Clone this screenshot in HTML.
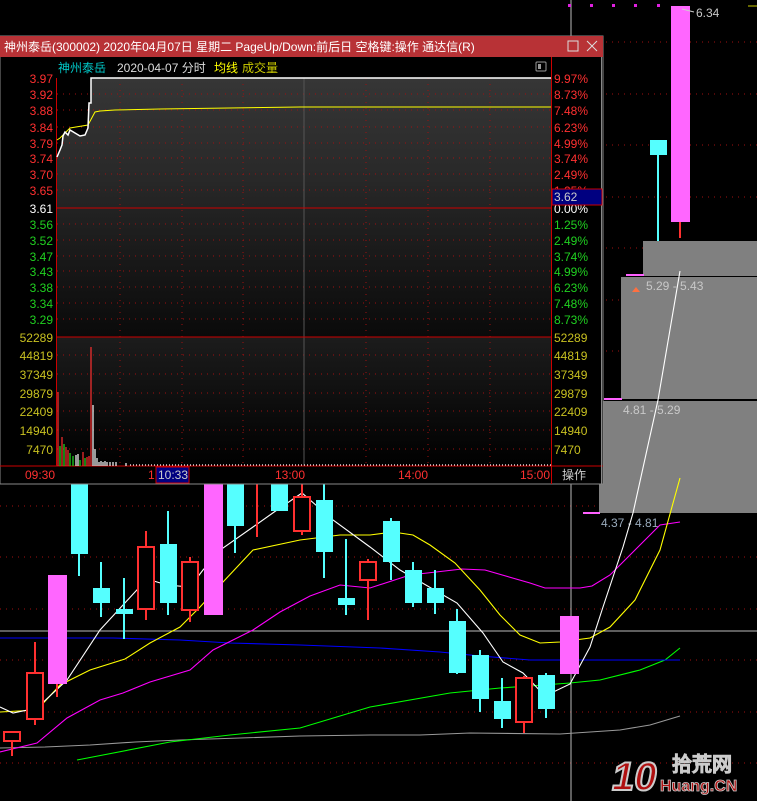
<!DOCTYPE html>
<html><head><meta charset="utf-8"><style>
html,body{margin:0;padding:0;background:#000;width:757px;height:801px;overflow:hidden}
svg{display:block}
text{font-family:"Liberation Sans","Noto Sans CJK SC",sans-serif}
</style></head><body>
<svg width="757" height="801" viewBox="0 0 757 801" xmlns="http://www.w3.org/2000/svg">
<rect width="757" height="801" fill="#000"/>
<g stroke="#a01010" stroke-dasharray="1,5" stroke-width="1">
<line x1="0" y1="42" x2="757" y2="42"/><line x1="0" y1="94" x2="757" y2="94"/><line x1="0" y1="145" x2="757" y2="145"/><line x1="0" y1="197" x2="757" y2="197"/><line x1="0" y1="248" x2="757" y2="248"/><line x1="0" y1="300" x2="757" y2="300"/><line x1="0" y1="351" x2="757" y2="351"/><line x1="0" y1="403" x2="757" y2="403"/><line x1="0" y1="454" x2="757" y2="454"/><line x1="0" y1="506" x2="757" y2="506"/><line x1="0" y1="557" x2="757" y2="557"/><line x1="0" y1="609" x2="757" y2="609"/><line x1="0" y1="660" x2="757" y2="660"/><line x1="0" y1="712" x2="757" y2="712"/><line x1="0" y1="763" x2="757" y2="763"/>
</g>
<line x1="0" y1="631" x2="757" y2="631" stroke="#bbb"/>
<line x1="571" y1="0" x2="571" y2="801" stroke="#bbb"/>
<g fill="#e020e0"><rect x="568" y="4" width="3" height="3"/><rect x="590" y="4" width="3" height="3"/><rect x="612" y="4" width="3" height="3"/><rect x="634" y="4" width="3" height="3"/><rect x="657" y="4" width="3" height="3"/></g>
<line x1="748" y1="6" x2="757" y2="6" stroke="#cc0"/>
<rect x="643" y="241" width="114" height="35" fill="#808080"/>
<rect x="621" y="277" width="136" height="122" fill="#808080"/>
<rect x="599" y="401" width="158" height="112" fill="#808080"/>
<line x1="626" y1="275" x2="644" y2="275" stroke="#ff60ff" stroke-width="2"/>
<line x1="604" y1="399" x2="622" y2="399" stroke="#ff60ff" stroke-width="2"/>
<line x1="583" y1="513" x2="600" y2="513" stroke="#ff60ff" stroke-width="2"/>
<polygon points="632,292 636,287 640,292" fill="#ff7040"/>
<g fill="#c8c8c8" font-size="12"><text x="646" y="290">5.29 - 5.43</text><text x="623" y="414">4.81 - 5.29</text><text x="601" y="527" fill="#9ab">4.37 - 4.81</text></g>
<g fill="none" stroke-width="1.1">
<polyline stroke="#999" points="0,748 45,747 90,745 135,742 180,740 240,738 300,736 370,735 420,735 470,733 560,734 620,730 650,725 680,716"/>
<polyline stroke="#00ff00" points="77,760 170,742 230,735 300,728 370,707 450,693 500,688 530,686 570,683 600,680 640,670 665,660 680,648"/>
<polyline stroke="#0000ff" points="0,638 113,638 180,640 230,643 300,645 380,648 440,652 480,656 530,660 560,660 680,660"/>
<polyline stroke="#ff00ff" points="0,752 37,743 67,718 100,700 123,693 150,682 190,670 213,650 253,630 280,612 310,596 340,585 370,588 410,575 462,569 485,570 530,583 545,588 580,588 592,586 610,575 630,555 660,525 680,522"/>
<polyline stroke="#ffff00" points="0,712 37,710 60,685 90,670 125,659 150,643 180,627 200,607 223,582 253,550 300,540 340,535 370,535 393,532 413,535 430,545 455,563 480,590 500,615 520,635 540,643 560,642 590,638 610,627 635,600 660,550 680,478"/>
<polyline stroke="#fff" points="0,707 13,713 37,708 67,680 100,630 147,579 167,585 190,587 203,570 223,548 253,527 277,510 302,493 333,520 370,547 400,570 457,603 483,633 503,662 523,673 545,696 570,684 590,647 603,607 623,547 633,513 658,400 680,271"/>
</g>
<g stroke="#ff3030" stroke-width="2" fill="none">
<line x1="12" y1="731" x2="12" y2="756"/><rect x="4" y="732" width="16" height="9" fill="#000"/>
<line x1="35" y1="642" x2="35" y2="725"/><rect x="27" y="673" width="16" height="46" fill="#000"/>
<line x1="57" y1="684" x2="57" y2="697"/>
<line x1="146" y1="531" x2="146" y2="620"/><rect x="138" y="547" width="16" height="62" fill="#000"/>
<line x1="190" y1="557" x2="190" y2="622"/><rect x="182" y="562" width="16" height="48" fill="#000"/>
<line x1="257" y1="484" x2="257" y2="537"/>
<line x1="302" y1="484" x2="302" y2="535"/><rect x="294" y="497" width="16" height="34" fill="#000"/>
<line x1="368" y1="559" x2="368" y2="620"/><rect x="360" y="562" width="16" height="18" fill="#000"/>
<line x1="524" y1="676" x2="524" y2="733"/><rect x="516" y="678" width="16" height="44" fill="#000"/>
<line x1="680" y1="220" x2="680" y2="238"/>
</g>
<g stroke="#55ffff" stroke-width="2"><line x1="79" y1="484" x2="79" y2="576"/><line x1="101" y1="562" x2="101" y2="617"/><line x1="124" y1="578" x2="124" y2="639"/><line x1="168" y1="511" x2="168" y2="615"/><line x1="235" y1="484" x2="235" y2="553"/><line x1="324" y1="484" x2="324" y2="578"/><line x1="346" y1="539" x2="346" y2="615"/><line x1="391" y1="518" x2="391" y2="580"/><line x1="413" y1="562" x2="413" y2="607"/><line x1="435" y1="570" x2="435" y2="614"/><line x1="457" y1="609" x2="457" y2="674"/><line x1="480" y1="650" x2="480" y2="712"/><line x1="502" y1="678" x2="502" y2="728"/><line x1="546" y1="673" x2="546" y2="718"/><line x1="658" y1="150" x2="658" y2="241"/></g>
<g fill="#55ffff"><rect x="71" y="484" width="17" height="70"/><rect x="93" y="588" width="17" height="15"/><rect x="116" y="609" width="17" height="5"/><rect x="160" y="544" width="17" height="59"/><rect x="227" y="484" width="17" height="42"/><rect x="271" y="484" width="17" height="27"/><rect x="316" y="500" width="17" height="52"/><rect x="338" y="598" width="17" height="7"/><rect x="383" y="521" width="17" height="41"/><rect x="405" y="570" width="17" height="33"/><rect x="427" y="588" width="17" height="15"/><rect x="449" y="621" width="17" height="52"/><rect x="472" y="655" width="17" height="44"/><rect x="494" y="701" width="17" height="18"/><rect x="538" y="675" width="17" height="34"/><rect x="650" y="140" width="17" height="15"/></g>
<g fill="#ff66ff"><rect x="48" y="575" width="19" height="109"/><rect x="204" y="484" width="19" height="131"/><rect x="560" y="616" width="19" height="58"/><rect x="671" y="6" width="19" height="216"/></g>
<text x="696" y="17" font-size="12" fill="#c8c8c8">6.34</text>
<line x1="682" y1="9" x2="694" y2="12" stroke="#ccc"/>
<text x="612" y="790" font-size="40" font-weight="bold" fill="#b01010" stroke="#ccc" stroke-width="2" font-style="italic">10</text>
<text x="672" y="771" font-size="20" fill="#222" stroke="#ccc" stroke-width="1.5">拾荒网</text>
<text x="660" y="791" font-size="16" font-weight="bold" fill="#b01010" stroke="#ccc" stroke-width="0.8">Huang.CN</text>
<rect x="0" y="36" width="603" height="448" fill="#000" stroke="#888"/>
<rect x="0" y="36" width="603" height="21" fill="#b83236"/>
<text x="4" y="51" font-size="12" fill="#fff">神州泰岳(300002) 2020年04月07日 星期二 PageUp/Down:前后日 空格键:操作 通达信(R)</text>
<rect x="568" y="41" width="10" height="10" fill="none" stroke="#ddd"/>
<path d="M587,41 L597,51 M597,41 L587,51" stroke="#ddd"/>
<text x="58" y="72" font-size="12" fill="#00c8c8">神州泰岳</text>
<text x="117" y="72" font-size="12" fill="#ddd">2020-04-07 分时</text>
<text x="214" y="72" font-size="12" fill="#ff0">均线</text>
<text x="242" y="72" font-size="12" fill="#cc0">成交量</text>
<rect x="536" y="62" width="10" height="9" fill="none" stroke="#999" rx="1"/><rect x="538" y="64" width="3" height="5" fill="#999"/>
<defs><linearGradient id="g1" x1="0" y1="0" x2="0" y2="1"><stop offset="0" stop-color="#363636"/><stop offset="0.35" stop-color="#2a2a2a"/><stop offset="1" stop-color="#0a0a0a"/></linearGradient>
<linearGradient id="g2" x1="0" y1="0" x2="0" y2="1"><stop offset="0" stop-color="#1c1c1c"/><stop offset="1" stop-color="#000"/></linearGradient></defs>
<rect x="57" y="78" width="494" height="259" fill="url(#g1)"/>
<polygon points="57,78 91,78 91,103 89,103 88,128 85,135 80,136 75,133 70,130 68,135 65,132 63,136 62,145 60,150 57,157" fill="#000"/>
<rect x="57" y="337" width="494" height="129" fill="url(#g2)"/>
<g stroke="#a01010" stroke-dasharray="1,5"><line x1="57" y1="94" x2="551" y2="94"/><line x1="57" y1="110" x2="551" y2="110"/><line x1="57" y1="127" x2="551" y2="127"/><line x1="57" y1="143" x2="551" y2="143"/><line x1="57" y1="158" x2="551" y2="158"/><line x1="57" y1="174" x2="551" y2="174"/><line x1="57" y1="190" x2="551" y2="190"/><line x1="57" y1="224" x2="551" y2="224"/><line x1="57" y1="240" x2="551" y2="240"/><line x1="57" y1="256" x2="551" y2="256"/><line x1="57" y1="271" x2="551" y2="271"/><line x1="57" y1="287" x2="551" y2="287"/><line x1="57" y1="303" x2="551" y2="303"/><line x1="57" y1="319" x2="551" y2="319"/><line x1="57" y1="355" x2="551" y2="355"/><line x1="57" y1="374" x2="551" y2="374"/><line x1="57" y1="393" x2="551" y2="393"/><line x1="57" y1="411" x2="551" y2="411"/><line x1="57" y1="430" x2="551" y2="430"/><line x1="57" y1="449" x2="551" y2="449"/>
<line x1="120" y1="78" x2="120" y2="466"/><line x1="182" y1="78" x2="182" y2="466"/><line x1="243" y1="78" x2="243" y2="466"/><line x1="366" y1="78" x2="366" y2="466"/><line x1="428" y1="78" x2="428" y2="466"/><line x1="490" y1="78" x2="490" y2="466"/></g>
<line x1="304" y1="78" x2="304" y2="466" stroke="#555"/>
<line x1="57" y1="208" x2="551" y2="208" stroke="#c00"/>
<line x1="57" y1="337" x2="551" y2="337" stroke="#c00"/>
<line x1="0" y1="466" x2="603" y2="466" stroke="#c00"/>
<line x1="56.5" y1="78" x2="56.5" y2="466" stroke="#c00"/>
<line x1="551.5" y1="57" x2="551.5" y2="466" stroke="#c00"/>
<line x1="601.5" y1="57" x2="601.5" y2="484" stroke="#888"/>
<polyline fill="none" stroke="#ff0" points="57,140 60,138 70,128 88,125 95,112 100,111 115,110 160,109 300,107 551,107"/>
<polyline fill="none" stroke="#fff" stroke-width="1.5" points="57,157 60,150 62,145 63,136 65,132 68,135 70,130 75,133 80,136 85,135 88,128 89,103 91,103 91,78 551,78"/>
<g stroke-width="1.2">
<g stroke="#ff3030"><line x1="58" y1="466" x2="58" y2="392"/><line x1="62" y1="466" x2="62" y2="437"/><line x1="66" y1="466" x2="66" y2="447"/><line x1="68" y1="466" x2="68" y2="450"/><line x1="83" y1="466" x2="83" y2="452"/><line x1="87" y1="466" x2="87" y2="457"/><line x1="89" y1="466" x2="89" y2="456"/><line x1="91" y1="466" x2="91" y2="347"/></g>
<g stroke="#20e020"><line x1="60" y1="466" x2="60" y2="446"/><line x1="64" y1="466" x2="64" y2="444"/><line x1="70" y1="466" x2="70" y2="453"/><line x1="73" y1="466" x2="73" y2="456"/><line x1="80" y1="466" x2="80" y2="460"/><line x1="85" y1="466" x2="85" y2="458"/></g>
<g stroke="#fff"><line x1="76" y1="466" x2="76" y2="455"/><line x1="78" y1="466" x2="78" y2="454"/><line x1="93" y1="466" x2="93" y2="405"/><line x1="95" y1="466" x2="95" y2="449"/><line x1="97" y1="466" x2="97" y2="458"/><line x1="99" y1="466" x2="99" y2="462"/><line x1="101" y1="466" x2="101" y2="461"/><line x1="103" y1="466" x2="103" y2="462"/><line x1="105" y1="466" x2="105" y2="461"/><line x1="107" y1="466" x2="107" y2="462"/><line x1="110" y1="466" x2="110" y2="462"/><line x1="113" y1="466" x2="113" y2="462"/><line x1="116" y1="466" x2="116" y2="462"/><line x1="126" y1="466" x2="126" y2="463"/></g>
<line x1="130" y1="465" x2="551" y2="465" stroke="#fff" stroke-dasharray="1,2"/>
</g>
<g font-size="12" text-anchor="end">
<g fill="#ff3030"><text x="53" y="83">3.97</text><text x="53" y="99">3.92</text><text x="53" y="115">3.88</text><text x="53" y="132">3.84</text><text x="53" y="148">3.79</text><text x="53" y="163">3.74</text><text x="53" y="179">3.70</text><text x="53" y="195">3.65</text></g>
<text x="53" y="213" fill="#fff">3.61</text>
<g fill="#20d020"><text x="53" y="229">3.56</text><text x="53" y="245">3.52</text><text x="53" y="261">3.47</text><text x="53" y="276">3.43</text><text x="53" y="292">3.38</text><text x="53" y="308">3.34</text><text x="53" y="324">3.29</text></g>
<g fill="#c8c020"><text x="53" y="342">52289</text><text x="53" y="360">44819</text><text x="53" y="379">37349</text><text x="53" y="398">29879</text><text x="53" y="416">22409</text><text x="53" y="435">14940</text><text x="53" y="454">7470</text></g>
</g>
<g font-size="12">
<g fill="#ff3030"><text x="554" y="83">9.97%</text><text x="554" y="99">8.73%</text><text x="554" y="115">7.48%</text><text x="554" y="132">6.23%</text><text x="554" y="148">4.99%</text><text x="554" y="163">3.74%</text><text x="554" y="179">2.49%</text><text x="554" y="195">1.25%</text></g>
<text x="554" y="213" fill="#fff">0.00%</text>
<g fill="#20d020"><text x="554" y="229">1.25%</text><text x="554" y="245">2.49%</text><text x="554" y="261">3.74%</text><text x="554" y="276">4.99%</text><text x="554" y="292">6.23%</text><text x="554" y="308">7.48%</text><text x="554" y="324">8.73%</text></g>
<g fill="#c8c020"><text x="554" y="342">52289</text><text x="554" y="360">44819</text><text x="554" y="379">37349</text><text x="554" y="398">29879</text><text x="554" y="416">22409</text><text x="554" y="435">14940</text><text x="554" y="454">7470</text></g>
</g>
<rect x="552" y="189" width="50" height="16" fill="#000080" stroke="#c00"/>
<text x="554" y="201" font-size="12" fill="#ccc">3.62</text>
<g font-size="12" fill="#ff3030"><text x="25" y="479">09:30</text><text x="148" y="479">1</text><text x="275" y="479">13:00</text><text x="398" y="479">14:00</text><text x="520" y="479">15:00</text></g>
<rect x="156" y="467" width="33" height="16" fill="#000080" stroke="#c00"/>
<text x="158" y="479" font-size="12" fill="#ccc">10:33</text>
<line x1="551.5" y1="466" x2="551.5" y2="484" stroke="#c00"/>
<text x="562" y="479" font-size="12" fill="#ccc">操作</text>
</svg>
</body></html>
